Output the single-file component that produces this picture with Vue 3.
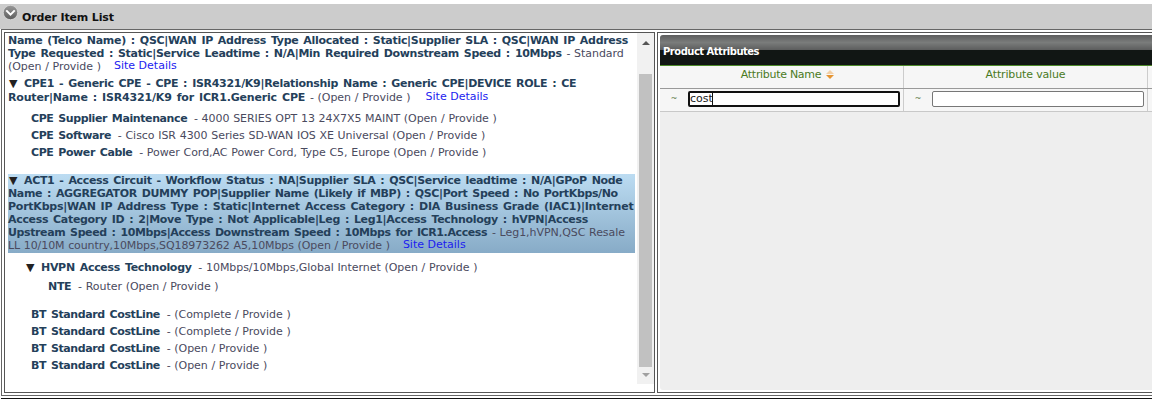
<script setup>
const costLines = ['(Complete / Provide )', '(Complete / Provide )', '(Open / Provide )', '(Open / Provide )']
</script>

<template>
  <div class="page">
    <header class="bar">
      <svg class="toggle" width="17" height="17" viewBox="0 0 20 20">
        <defs>
          <linearGradient id="tg" x1="0" y1="0" x2="0" y2="1">
            <stop offset="0" stop-color="#9a9a9a" />
            <stop offset="1" stop-color="#5c5c5c" />
          </linearGradient>
        </defs>
        <circle cx="10" cy="10" r="8.5" fill="url(#tg)" stroke="#d8d8d8" />
        <path d="M5 7.5 L10 12.5 L15 7.5" fill="none" stroke="#fff" stroke-width="2.4" />
      </svg>
      <span class="title">Order Item List</span>
    </header>
    <main class="split">
      <section class="left">
        <div class="tree">
          <div class="node first">
            <b>Name (Telco Name) : QSC|WAN IP Address Type Allocated : Static|Supplier SLA : QSC|WAN IP Address<br />Type Requested : Static|Service Leadtime : N/A|Min Required Downstream Speed : 10Mbps</b>
            <span class="sub"> - Standard<br />(Open / Provide )</span><a class="site">Site Details</a>
          </div>
          <div class="node cpe">
            <b><i class="tri">▼</i>CPE1 - Generic CPE - CPE : ISR4321/K9|Relationship Name : Generic CPE|DEVICE ROLE : CE<br /><span class="line2 loose">Router|Name : ISR4321/K9 for ICR1.Generic CPE</span></b>
            <span class="sub line2"> - (Open / Provide )</span><a class="site wide">Site Details</a>
          </div>
          <div class="leaf l1 gapped"><b>CPE Supplier Maintenance</b><span class="sub"> - 4000 SERIES OPT 13 24X7X5 MAINT (Open / Provide )</span></div>
          <div class="leaf l1"><b>CPE Software</b><span class="sub"> - Cisco ISR 4300 Series SD-WAN IOS XE Universal (Open / Provide )</span></div>
          <div class="leaf l1"><b>CPE Power Cable</b><span class="sub"> - Power Cord,AC Power Cord, Type C5, Europe (Open / Provide )</span></div>
          <div class="node selected">
            <b><i class="tri">▼</i><span class="a1">ACT1 - Access Circuit - Workflow Status : NA|Supplier SLA : QSC|Service leadtime : N/A|GPoP Node</span><br /><span class="a2">Name : AGGREGATOR DUMMY POP|Supplier Name (Likely if MBP) : QSC|Port Speed : No PortKbps/No</span><br /><span class="a3">PortKbps|WAN IP Address Type : Static|Internet Access Category : DIA Business Grade (IAC1)|Internet</span><br /><span class="a4">Access Category ID : 2|Move Type : Not Applicable|Leg : Leg1|Access Technology : hVPN|Access</span><br /><span class="a5">Upstream Speed : 10Mbps|Access Downstream Speed : 10Mbps for ICR1.Access</span></b>
            <span class="sub"> - Leg1,hVPN,QSC Resale<br /><span class="narrow">LL 10/10M country,10Mbps,SQ18973262 A5,10Mbps (Open / Provide )</span></span><a class="site">Site Details</a>
          </div>
          <div class="leaf l2"><b><i class="tri">▼</i>HVPN Access Technology</b><span class="sub"> - 10Mbps/10Mbps,Global Internet (Open / Provide )</span></div>
          <div class="leaf l3"><b>NTE</b><span class="sub"> - Router (Open / Provide )</span></div>
          <div class="costs">
            <div v-for="(s, i) in costLines" :key="i" class="leaf l1"><b>BT Standard CostLine</b><span class="sub"> - {{ s }}</span></div>
          </div>
        </div>
        <div class="scroll">
          <span class="arrow up"></span>
          <span class="thumb"></span>
          <span class="arrow down"></span>
        </div>
      </section>
      <section class="right">
        <div class="panel">
          <div class="caption">Product Attributes</div>
          <div class="row heads">
            <div class="cell c1 named">Attribute Name
              <span class="sort"><i class="s-up"></i><i class="s-down"></i></span>
            </div>
            <div class="cell c2">Attribute value</div>
            <div class="cell c3"></div>
          </div>
          <div class="row filters">
            <div class="cell c1"><span class="tilde">~</span><span class="field"><input class="box focus" value="cost" /><i class="caret"></i></span></div>
            <div class="cell c2"><span class="tilde">~</span><span class="field"><input class="box" /></span></div>
            <div class="cell c3"></div>
          </div>
        </div>
      </section>
    </main>
    <div class="foot"></div>
  </div>
</template>

<style scoped>
.page {
  width: 1152px;
  height: 401px;
  overflow: hidden;
  background: #fff;
  font-family: "DejaVu Sans", Verdana, sans-serif;
  font-size: 11px;
  color: #444;
  padding-top: 4px;
  box-sizing: border-box;
}
.bar {
  height: 25px;
  background: #ccc;
  display: flex;
  align-items: center;
}
.toggle { margin: -9px 3px 0 2px; flex: none; }
.title { font-weight: bold; color: #111; font-size: 11px; letter-spacing: -0.15px; padding-top: 1px; }
.split {
  display: flex;
  gap: 2px;
  height: 367px;
  margin-left: 1px;
  padding: 2px 0 2px 2px;
  border: 1px solid #666;
  border-right: 0;
  box-sizing: border-box;
}
.left {
  width: 651px;
  flex: none;
  display: flex;
  border: 1px solid #555;
  box-sizing: border-box;
}
.tree { flex: 1; padding: 1px 0 0 3px; line-height: 13px; color: #2f4356; min-width: 0; }
.tree b { color: #24405a; font-weight: bold; letter-spacing: -0.3px; word-spacing: 1.4px; }
.tree .l1 b { letter-spacing: -0.4px; }
.sub { color: #4a4a5e; font-size: 11px; letter-spacing: -0.05px; word-spacing: 0.3px; margin-left: 3px; }
.node .sub { margin-left: 1px; }
.node { white-space: nowrap; }
.cpe { margin-top: 4px; }
.line2 { position: relative; top: 1px; }
.loose { letter-spacing: -0.17px; }
.a1 { letter-spacing: -0.34px; }
.a2 { letter-spacing: -0.36px; }
.a3 { letter-spacing: -0.24px; }
.a4 { letter-spacing: -0.32px; }
.a5 { letter-spacing: -0.39px; }
.narrow { letter-spacing: -0.09px; }
.site { color: #1c1cf0; margin-left: 13px; position: relative; top: -1px; }
.wide { margin-left: 15px; top: 0; }
.tri { font-style: normal; display: inline-block; width: 16px; padding-left: 1px; box-sizing: border-box; color: #222; font-size: 11px; letter-spacing: 0; }
.leaf { white-space: nowrap; height: 17px; line-height: 17px; }
.l1 { padding-left: 23px; }
.gapped { margin-top: 7px; }
.selected {
  margin-top: 13px;
  margin-right: 2px;
  background: linear-gradient(#bcdcf2, #87abc7);
  height: 79px;
  color: #333;
}
.l2 { padding-left: 17px; margin-top: 4px; height: 21px; line-height: 21px; }
.l3 { padding-left: 40px; }
.costs { margin-top: 11px; }
.scroll {
  width: 17px;
  flex: none;
  height: 351px;
  background: #f1f1f1;
  display: flex;
  flex-direction: column;
  align-items: center;
}
.arrow { flex: none; width: 0; height: 0; border-left: 4px solid transparent; border-right: 4px solid transparent; }
.up { border-bottom: 4px solid #555; margin: 8px 0 29px; }
.down { border-top: 4px solid #a0a0a0; margin: 6px 0 7px; }
.thumb { flex: 1; width: 13px; background: #c1c1c1; }
.right {
  flex: 1;
  min-width: 0;
  border: 1px solid #555;
  border-right: 0;
  padding: 2px 0 2px 2px;
  box-sizing: border-box;
}
.panel { height: 100%; background: #eee; border-radius: 3px 0 0 3px; overflow: hidden; }
.caption {
  height: 31px;
  line-height: 34px;
  padding-left: 3px;
  box-sizing: border-box;
  background: linear-gradient(#5e5e5e 0, #7a7c7b 25%, #5c5d5d 50%, #111614 50%, #111614 100%);
  border-bottom: 1px solid #4d8a2a;
  color: #fff;
  font-weight: bold;
  font-size: 10px;
  letter-spacing: -0.5px;
}
.row { display: flex; background: #f6f6f6; border-bottom: 1px solid #c8c8c8; box-sizing: border-box; height: 23px; }
.heads { border-bottom-color: #999; }
.heads .cell { padding-bottom: 6px; letter-spacing: -0.15px; }
.heads .named { padding-left: 12px; letter-spacing: -0.3px; }
.filters .cell { padding-bottom: 3px; justify-content: flex-start; }
.cell {
  border-right: 1px solid #ccc;
  display: flex;
  align-items: center;
  justify-content: center;
  color: #4a7a1e;
  flex: none;
  box-sizing: border-box;
}
.c1 { width: 244px; }
.c2 { width: 244px; }
.c3 { flex: 1; border-right: 0; }
.sort { display: inline-flex; flex-direction: column; gap: 1px; margin-left: 5px; }
.s-up, .s-down { width: 0; height: 0; border-left: 4px solid transparent; border-right: 4px solid transparent; }
.s-up { border-bottom: 4px solid #f2cfa6; }
.s-down { border-top: 4px solid #e69432; }
.tilde { width: 28px; text-align: center; color: #5d7a45; font-size: 8px; flex: none; }
.field { position: relative; display: flex; flex: none; }
.box {
  width: 212px;
  height: 16px;
  box-sizing: border-box;
  border: 1px solid #777;
  border-radius: 2px;
  background: #fff;
  padding: 0 1px;
  font: 11px "DejaVu Sans", sans-serif;
  color: #222;
  outline: none;
}
.focus { border: 2px solid #111; padding: 0; }
.caret { position: absolute; left: 24px; top: 2px; width: 1px; height: 12px; background: #111; }
.foot { height: 1px; margin: 2px 0 0 1px; background: #111; }
</style>
